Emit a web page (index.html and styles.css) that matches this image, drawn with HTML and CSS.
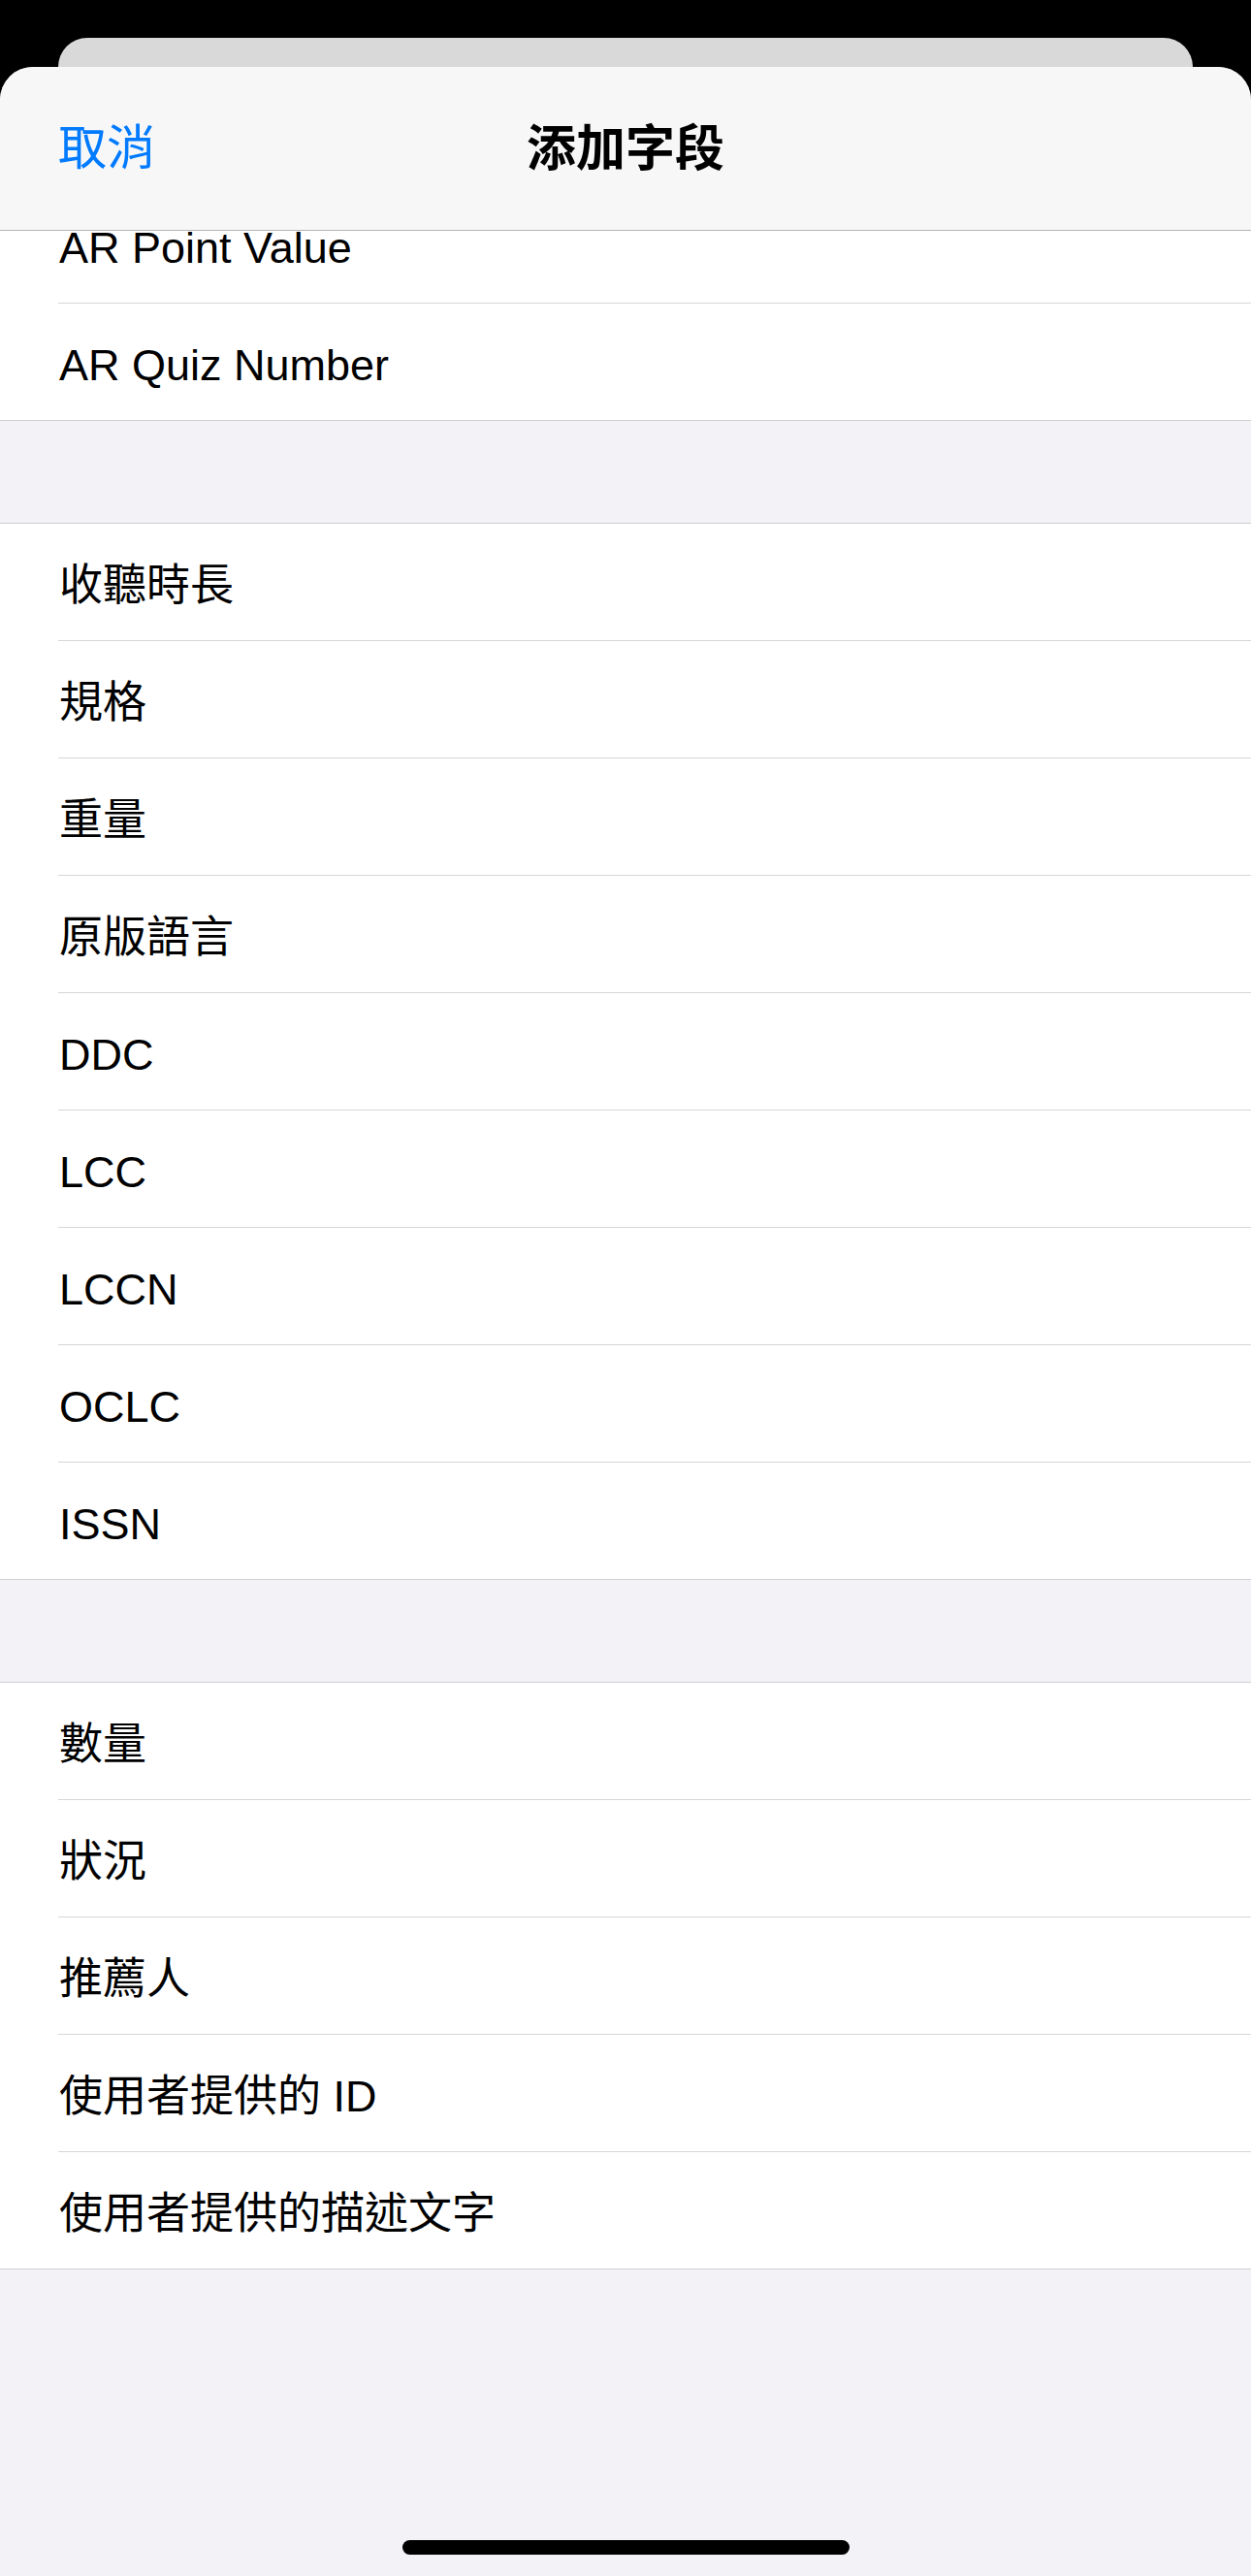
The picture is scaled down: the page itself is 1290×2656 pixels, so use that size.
FILE: index.html
```html
<!DOCTYPE html>
<html lang="zh-Hant">
<head>
  <meta charset="UTF-8">
  <meta name="viewport" content="width=device-width, initial-scale=1.0">
  <title>添加字段</title>
  <link rel="stylesheet" href="styles.css">
</head>
<body>
  <div class="back-card"></div>

  <div class="sheet">
    <header class="navbar">
      <a class="nav-cancel" href="#">取消</a>
      <h1 class="nav-title">添加字段</h1>
      <span></span>
    </header>

    <div class="scroll">
      <div class="scroll-content">
        <ul class="group group-first">
          <li class="row">AR Point Value</li>
          <li class="row">AR Quiz Number</li>
        </ul>

        <ul class="group">
          <li class="row">收聽時長</li>
          <li class="row">規格</li>
          <li class="row">重量</li>
          <li class="row">原版語言</li>
          <li class="row">DDC</li>
          <li class="row">LCC</li>
          <li class="row">LCCN</li>
          <li class="row">OCLC</li>
          <li class="row">ISSN</li>
        </ul>

        <ul class="group">
          <li class="row">數量</li>
          <li class="row">狀況</li>
          <li class="row">推薦人</li>
          <li class="row">使用者提供的 ID</li>
          <li class="row">使用者提供的描述文字</li>
        </ul>
      </div>
    </div>

    <div class="home-bar"></div>
  </div>
</body>
</html>
```

FILE: styles.css
```css
/* Base */
body {
  margin: 0;
  height: 2656px;
  overflow: hidden;
  background: #000;
  font-family: "Liberation Sans", "Noto Sans CJK TC", sans-serif;
  color: #000;
}

/* Stacked sheet behind */
.back-card {
  height: 30px;
  margin: 39px 60px 0;
  background: #d9d9d9;
  border-radius: 30px 30px 0 0;
}

.sheet {
  height: 2587px;
  display: flex;
  flex-direction: column;
  background: #f2f2f7;
  border-radius: 34px 34px 0 0;
  overflow: hidden;
}

/* Navigation bar */
.navbar {
  flex: none;
  height: 168px;
  display: grid;
  grid-template-columns: 1fr auto 1fr;
  align-items: center;
  padding: 0 60px;
  background: #f7f7f7;
  border-bottom: 1px solid #b4b4b4;
}

.nav-cancel {
  justify-self: start;
  color: #007aff;
  font-size: 50px;
  line-height: 1;
  text-decoration: none;
}

.nav-title {
  margin: 0;
  font-size: 51px;
  font-weight: bold;
  line-height: 1;
}

/* List */
.scroll {
  flex: 1;
  min-height: 0;
  overflow: hidden;
}

.scroll-content {
  margin-top: -46px;
}

.group {
  list-style: none;
  margin: 0 0 105px;
  padding: 0;
  background: #fff;
  border-top: 1px solid #cfcfd3;
  border-bottom: 1px solid #cfcfd3;
}

.group-first {
  border-top: 0;
}

.row {
  height: 121px;
  box-sizing: border-box;
  display: flex;
  align-items: center;
  padding: 6px 0 0 61px;
  font-size: 45px;
  line-height: 1;
  background: linear-gradient(#d6d6d9, #d6d6d9) 60px 100% / 100% 1px no-repeat;
}

.row:last-child {
  height: 120px;
  background: none;
}

/* Home indicator */
.home-bar {
  flex: none;
  width: 461px;
  height: 15px;
  margin: 0 auto 22px;
  background: #000;
  border-radius: 8px;
}
```
